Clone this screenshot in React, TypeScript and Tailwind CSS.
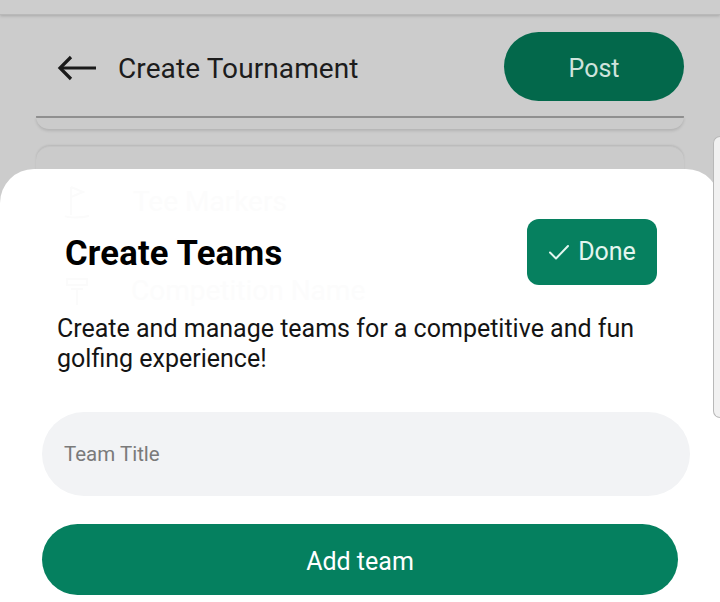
import React from "react";

export default function App() {
  return (
    <div className="relative w-[720px] h-[602px] overflow-hidden bg-[#cccccc] font-['Roboto',sans-serif]">
      {/* status bar strip */}
      <div className="h-[15px] bg-[#cdcdcd] shadow-[0_1px_3px_rgba(0,0,0,0.18)] border-b border-[#b9b9b9]" />

      {/* header */}
      <div className="flex items-center pl-[57px] pr-[36px] pt-[16px] h-[86px]">
        <svg width="40" height="26" viewBox="0 0 40 26" fill="none" stroke="#1a1a1a" strokeWidth="3.2" strokeLinecap="butt" strokeLinejoin="miter" className="mt-[3px]">
          <path d="M39 13H3" />
          <path d="M14 2L3 13l11 11" />
        </svg>
        <span className="ml-[21px] mt-[5px] text-[28px] text-[#1c1c1c] tracking-[0.1px]">Create Tournament</span>
        <div className="ml-auto w-[180px] h-[69px] rounded-full bg-[#03684b] flex items-center justify-center pt-[5px] text-[25px] text-[#cfe3dc]">
          Post
        </div>
      </div>

      {/* underlying card edges */}
      <div className="mx-[36px] mt-[15px] h-[13px] border-t-2 border-[#8f8f8f] rounded-b-[14px] bg-[#cbcbcb] shadow-[0_2px_3px_rgba(0,0,0,0.12)]" />
      <div className="mx-[36px] mt-[17px] h-[60px] rounded-t-[14px] bg-[#cbcbcb] shadow-[0_-1px_2px_rgba(0,0,0,0.10)] border-t border-[#c4c4c4]" />

      {/* bottom sheet */}
      <div className="absolute left-0 right-0 top-[169px] bottom-0 bg-white rounded-t-[34px]">
        {/* ghosted content */}
        <div className="absolute left-[63px] top-[12px] flex items-center gap-[42px] text-[#fcfcfc] text-[28px]">
          <svg width="28" height="34" viewBox="0 0 28 34" fill="none" stroke="#fbfbfb" strokeWidth="2">
            <path d="M8 2v28M8 2l12 5-12 5M2 31c3 2 16 2 24 0" />
          </svg>
          <span>Tee Markers</span>
        </div>
        <div className="absolute left-[63px] top-[106px] flex items-center gap-[40px] text-[#fcfcfc] text-[28px] leading-[32px]">
          <svg width="28" height="32" viewBox="0 0 28 32" fill="none" stroke="#fbfbfb" strokeWidth="2">
            <path d="M4 4h20v6H4zM8 14h12M14 14v16" />
          </svg>
          <span>Competition Name</span>
        </div>

        <div className="relative flex flex-col">
          <div className="flex items-center justify-between pl-[65px] pr-[63px] pt-[50px]">
            <h2 className="text-[34.6px] font-bold text-black leading-none tracking-[0.2px] mt-[2px]">Create Teams</h2>
            <div className="w-[130px] h-[66px] rounded-[12px] bg-[#06805f] flex items-center justify-center gap-[8px] text-[25px] text-[#e3f6ef]">
              <svg width="22" height="18" viewBox="0 0 22 18" fill="none" stroke="#e3f6ef" strokeWidth="2" strokeLinecap="round" strokeLinejoin="round">
                <path d="M2 9.5l6 6L20 3" />
              </svg>
              <span>Done</span>
            </div>
          </div>

          <p className="ml-[57px] mr-[40px] mt-[29px] text-[25px] leading-[30px] text-[#141414]">
            Create and manage teams for a competitive and fun golfing experience!
          </p>

          <div className="ml-[42px] mr-[30px] mt-[38px] h-[84px] rounded-full bg-[#f2f3f5] flex items-center pl-[22px] text-[20.5px] text-[#7a7a7a]">
            Team Title
          </div>

          <div className="ml-[42px] mr-[42px] mt-[28px] h-[71px] rounded-full bg-[#05805f] flex items-center justify-center pt-[4px] text-[25px] text-white">
            Add team
          </div>
        </div>
      </div>

      {/* edge panel handle */}
      <div className="absolute right-0 top-[136px] w-[7px] h-[282px] rounded-l-[8px] bg-[#f1f1f1] border-l border-y border-[#b8b8b8]" />
    </div>
  );
}
